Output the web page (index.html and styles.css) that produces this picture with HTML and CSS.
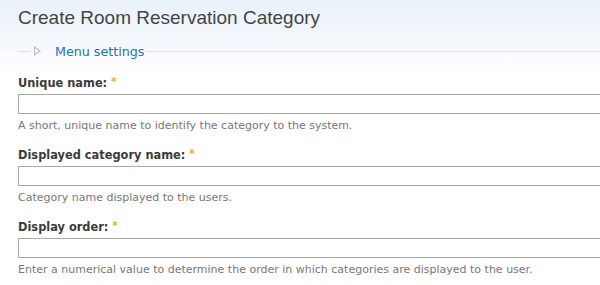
FILE: index.html
```html
<!DOCTYPE html>
<html lang="en">
<head>
    <meta charset="UTF-8">
    <title>Create Room Reservation Category</title>
    <link rel="stylesheet" href="styles.css">
</head>
<body>

<div class="page">
    <h1 class="title">Create Room Reservation Category</h1>

    <!-- Collapsed fieldset -->
    <div class="fieldset">
        <span class="line short"></span>
        <span class="toggle"></span>
        <a class="legend" href="#">Menu settings</a>
        <span class="line"></span>
    </div>

    <div class="form-item">
        <label for="name">Unique name: <span class="req">*</span></label>
        <input class="text" id="name" type="text">
        <div class="desc">A short, unique name to identify the category to the system.</div>
    </div>

    <div class="form-item">
        <label for="display">Displayed category name: <span class="req">*</span></label>
        <input class="text" id="display" type="text">
        <div class="desc">Category name displayed to the users.</div>
    </div>

    <div class="form-item">
        <label for="order">Display order: <span class="req">*</span></label>
        <input class="text" id="order" type="text">
        <div class="desc">Enter a numerical value to determine the order in which categories are displayed to the user.</div>
    </div>
</div>

</body>
</html>
```

FILE: styles.css
```css
html, body {
    margin: 0;
    height: 100%;
    overflow: hidden;
}

body {
    font-family: "DejaVu Sans", Verdana, sans-serif;
    background: linear-gradient(#e9f1f9 0px, #f4f8fc 40px, #ffffff 70px) no-repeat;
    background-color: #fff;
}

.page {
    padding: 0 0 0 18px;
    width: 620px;
}

.title {
    font-family: "Liberation Sans", Arial, sans-serif;
    font-size: 19px;
    font-weight: normal;
    color: #444;
    margin: 0;
    padding-top: 7px;
    line-height: 22px;
}

/* collapsed fieldset legend */
.fieldset {
    display: flex;
    align-items: center;
    margin-top: 13px;
    height: 18px;
}

.line {
    flex: 1;
    height: 1px;
    background-color: #d6e4ec;
}

.line.short {
    flex: none;
    width: 12px;
}

.toggle {
    width: 0;
    height: 0;
    margin: 0 14px 0 4px;
    border-left: 7px solid #bbb;
    border-top: 5px solid transparent;
    border-bottom: 5px solid transparent;
    position: relative;
}

.toggle:after {
    content: "";
    position: absolute;
    left: -6px;
    top: -3px;
    border-left: 4px solid #f6f9fc;
    border-top: 3px solid transparent;
    border-bottom: 3px solid transparent;
}

.legend {
    font-family: "DejaVu Sans", Verdana, sans-serif;
    font-size: 12.7px;
    color: #2471b5;
    text-decoration: none;
    padding-right: 2px;
}

.form-item {
    margin-top: 14px;
}

.form-item + .form-item {
    margin-top: 13px;
}

.form-item label {
    display: block;
    font-weight: bold;
    font-size: 11.4px;
    color: #3b3b3b;
    line-height: 16px;
    margin-bottom: 3px;
}

.req {
    color: #f8a11c;
    font-size: 10px;
    vertical-align: 2px;
}

.text {
    display: block;
    box-sizing: border-box;
    width: 600px;
    height: 20px;
    margin: 0;
    border: 1px solid #aaa;
    background: #fff;
    padding: 2px;
}

.desc {
    font-size: 11px;
    color: #777;
    line-height: 14px;
    margin-top: 5px;
}
```
